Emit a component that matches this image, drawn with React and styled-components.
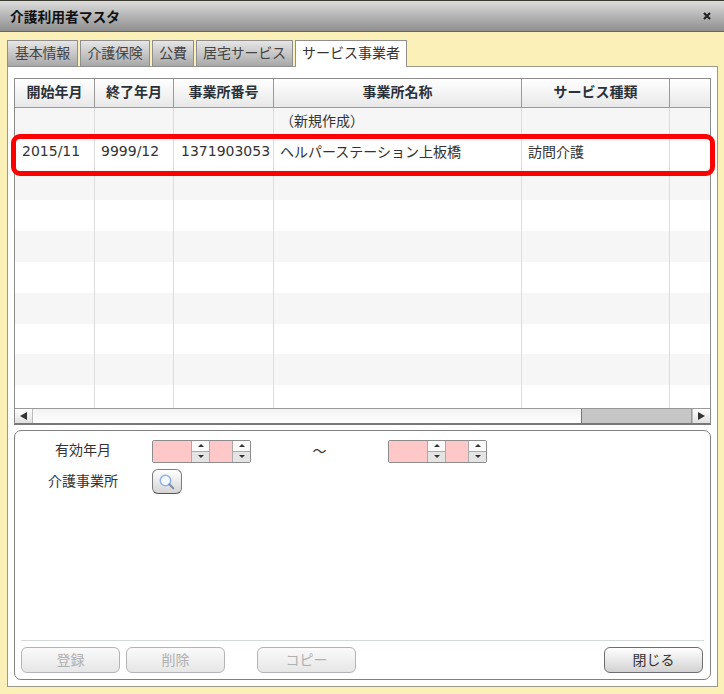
import React from 'react';
import styled, { createGlobalStyle } from 'styled-components';

const GlobalStyle = createGlobalStyle`
  html, body { margin: 0; padding: 0; background: #faf0b8; }
  body { font-family: "DejaVu Sans", "Noto Sans CJK JP", sans-serif; font-size: 14px; color: #222; }
`;

const Win = styled.div`
  width: 724px;
  height: 694px;
  box-sizing: border-box;
  display: flex;
  flex-direction: column;
  background: #faf0b8;
  border-top: 1px solid #3a3a30;
  overflow: hidden;
`;

const TitleBar = styled.div`
  height: 30px;
  flex: none;
  display: flex;
  align-items: center;
  justify-content: space-between;
  padding: 0 12px 0 10px;
  background: linear-gradient(#dcdcdc, #8e8e8e);
  border-bottom: 1px solid #666;
  font-weight: 700;
  font-size: 13.75px;
  color: #111;
`;

const Body = styled.div`
  flex: 1;
  display: flex;
  flex-direction: column;
  padding: 8px 6px 7px 7px;
  min-height: 0;
`;

const Tabs = styled.div`
  display: flex;
  gap: 2px;
  height: 26px;
  flex: none;
  position: relative;
  z-index: 1;
`;

const Tab = styled.div`
  box-sizing: border-box;
  width: ${p => p.$w}px;
  height: 27px;
  display: flex;
  align-items: center;
  justify-content: center;
  padding-bottom: 4px;
  border: 1px solid #8f8f8f;
  border-bottom: ${p => (p.$active ? 'none' : '1px solid #8f8f8f')};
  background: ${p => (p.$active ? '#fff' : 'linear-gradient(#e6e6e6, #a8a8a8)')};
  color: ${p => (p.$active ? '#333' : '#444')};
  font-size: 14px;
  letter-spacing: ${p => (p.$active ? '0' : '-0.2px')};
`;

const Panel = styled.div`
  flex: 1;
  box-sizing: border-box;
  display: flex;
  flex-direction: column;
  background: #fff;
  border: 1px solid #9a9a8a;
  padding: 11px 6px 6px 6px;
  min-height: 0;
`;

const GridBox = styled.div`
  position: relative;
  flex: none;
  height: 347px;
  box-sizing: border-box;
  display: flex;
  flex-direction: column;
  border: 1px solid #8c8c8c;
  border-bottom: 2px solid #777;
`;

const HeaderRow = styled.div`
  display: grid;
  grid-template-columns: 80px 79px 100px 248px 148px 1fr;
  height: 29px;
  box-sizing: border-box;
  flex: none;
  background: linear-gradient(#ffffff, #e8e8e8);
  border-bottom: 1px solid #9a9a9a;
`;

const HeadCell = styled.div`
  display: flex;
  align-items: center;
  justify-content: center;
  padding-bottom: 4px;
  border-right: 1px solid #999;
  font-weight: 700;
  font-size: 14px;
  color: #2b3138;
  &:last-child { border-right: none; }
`;

const Rows = styled.div`
  flex: 1;
  overflow: hidden;
  min-height: 0;
`;

const Row = styled.div`
  display: grid;
  grid-template-columns: 80px 79px 100px 248px 148px 1fr;
  height: 30.8px;
  background: ${p => (p.$odd ? '#f6f6f6' : '#fff')};
`;

const Cell = styled.div`
  display: flex;
  align-items: center;
  padding: 0 0 6px 6px;
  border-right: 1px solid #dcdcdc;
  white-space: nowrap;
  overflow: hidden;
  color: #333;
  &:first-child, &:nth-child(3) { padding-left: 7px; }
  &:last-child { border-right: none; }
`;

const Highlight = styled.div`
  position: absolute;
  left: -4px;
  right: -5px;
  top: 55px;
  height: 42px;
  box-sizing: border-box;
  border: 5px solid #f00;
  border-radius: 9px;
  pointer-events: none;
`;

const ScrollBar = styled.div`
  height: 15px;
  box-sizing: border-box;
  flex: none;
  display: flex;
  align-items: stretch;
  background: linear-gradient(#f2f2f2, #fff);
  border-top: 1px solid #999;
`;

const ScrollArrow = styled.div`
  width: 17px;
  flex: none;
  display: flex;
  align-items: center;
  justify-content: center;
  background: linear-gradient(#fff, #e0e0e0);
  border: solid #bbb;
  border-width: ${p => (p.$right ? '0 0 0 1px' : '0 1px 0 0')};
  &::before {
    content: "";
    border-style: solid;
    border-width: 4px 0;
    border-color: transparent;
    ${p => (p.$right ? 'border-left: 7px solid #333;' : 'border-right: 7px solid #333;')}
  }
`;

const ScrollTrack = styled.div`
  flex: 1;
  display: flex;
  justify-content: flex-end;
`;

const ScrollThumb = styled.div`
  width: 111px;
  box-sizing: border-box;
  background: #c6c6c6;
  border-left: 1px solid #777;
  border-right: 1px solid #999;
`;

const FormPanel = styled.div`
  flex: 1;
  margin-top: 5px;
  box-sizing: border-box;
  display: flex;
  flex-direction: column;
  border: 1px solid #808080;
  border-radius: 7px;
  padding: 8px 6px 6px 6px;
  min-height: 0;
`;

const FormRow = styled.div`
  display: flex;
  align-items: center;
  height: ${p => p.$h}px;
  margin-bottom: ${p => p.$mb || 0}px;
`;

const FormLabel = styled.div`
  width: 124px;
  margin-right: 7px;
  padding-bottom: 4px;
  text-align: center;
  color: #333;
`;

const SpinGroup = styled.div`
  display: flex;
  height: 23px;
  box-sizing: border-box;
  border: 1px solid #8c8c8c;
  border-radius: 2px;
  overflow: hidden;
`;

const SpinInput = styled.div`
  width: ${p => p.$w}px;
  background: #ffc8c8;
`;

const SpinButtons = styled.div`
  width: 17px;
  display: flex;
  flex-direction: column;
  border-left: 1px solid #aaa;
  border-right: ${p => (p.$last ? 'none' : '1px solid #aaa')};
  box-sizing: content-box;
`;

const SpinBtn = styled.div`
  flex: 1;
  display: flex;
  align-items: center;
  justify-content: center;
  background: ${p => (p.$down ? '#e4e4e4' : '#fafafa')};
  border-top: ${p => (p.$down ? '1px solid #aaa' : 'none')};
  &::before {
    content: "";
    border-left: 3px solid transparent;
    border-right: 3px solid transparent;
    ${p => (p.$down ? 'border-top: 3px solid #333;' : 'border-bottom: 3px solid #333;')}
  }
`;

const Tilde = styled.div`
  width: 137px;
  padding-bottom: 2px;
  text-align: center;
  color: #333;
  font-size: 14px;
`;

const SearchButton = styled.div`
  width: 30px;
  height: 25px;
  box-sizing: border-box;
  display: flex;
  align-items: center;
  justify-content: center;
  border: 1px solid #7c7c7c;
  border-bottom-color: #555;
  border-radius: 6px;
  background: linear-gradient(#fff, #d4d4d4);
`;

const Spacer = styled.div`
  flex: 1;
`;

const Divider = styled.div`
  height: 1px;
  flex: none;
  background: #d5dad8;
`;

const Footer = styled.div`
  display: flex;
  flex: none;
  margin-top: 6px;
`;

const Button = styled.div`
  width: 99px;
  height: 26px;
  box-sizing: border-box;
  display: flex;
  align-items: center;
  justify-content: center;
  padding-bottom: 2px;
  margin-right: ${p => p.$mr || 0}px;
  border: 1px solid ${p => (p.disabled ? '#b4b4b4' : '#6e6e6e')};
  border-radius: 6px;
  background: ${p => (p.disabled ? 'linear-gradient(#fafafa, #e6e6e6)' : 'linear-gradient(#fff, #d2d2d2)')};
  color: ${p => (p.disabled ? '#b0b0b0' : '#333')};
  font-size: 14px;
`;

const tabs = [
  { label: '基本情報', w: 71 },
  { label: '介護保険', w: 70 },
  { label: '公費', w: 42 },
  { label: '居宅サービス', w: 97 },
  { label: 'サービス事業者', w: 112, active: true },
];

const headers = ['開始年月', '終了年月', '事業所番号', '事業所名称', 'サービス種類', ''];

const rows = [
  ['', '', '', '\uFF08新規作成\uFF09', '', ''],
  ['2015/11', '9999/12', '1371903053', 'ヘルパーステーション上板橋', '訪問介護', ''],
  ...Array.from({ length: 8 }, () => ['', '', '', '', '', '']),
];

function Spinner({ last }) {
  return (
    <SpinButtons $last={last}>
      <SpinBtn />
      <SpinBtn $down />
    </SpinButtons>
  );
}

function DateSpin() {
  return (
    <SpinGroup>
      <SpinInput $w={38} />
      <Spinner />
      <SpinInput $w={22} />
      <Spinner last />
    </SpinGroup>
  );
}

export default function App() {
  return (
    <Win>
      <GlobalStyle />
      <TitleBar>
        <span>介護利用者マスタ</span>
        <svg width="10" height="10" viewBox="0 0 10 10">
          <path d="M2 2l6 6M8 2l-6 6" stroke="#222" strokeWidth="2.2" />
        </svg>
      </TitleBar>
      <Body>
        <Tabs>
          {tabs.map(t => (
            <Tab key={t.label} $w={t.w} $active={t.active}>{t.label}</Tab>
          ))}
        </Tabs>
        <Panel>
          <GridBox>
            <HeaderRow>
              {headers.map((h, i) => <HeadCell key={i}>{h}</HeadCell>)}
            </HeaderRow>
            <Rows>
              {rows.map((r, i) => (
                <Row key={i} $odd={i % 2 === 0}>
                  {r.map((c, j) => <Cell key={j}>{c}</Cell>)}
                </Row>
              ))}
            </Rows>
            <ScrollBar>
              <ScrollArrow />
              <ScrollTrack><ScrollThumb /></ScrollTrack>
              <ScrollArrow $right />
            </ScrollBar>
            <Highlight />
          </GridBox>
          <FormPanel>
            <FormRow $h={24} $mb={6}>
              <FormLabel>有効年月</FormLabel>
              <DateSpin />
              <Tilde>〜</Tilde>
              <DateSpin />
            </FormRow>
            <FormRow $h={25}>
              <FormLabel>介護事業所</FormLabel>
              <SearchButton>
                <svg width="18" height="18" viewBox="0 0 18 18" fill="none">
                  <circle cx="7.5" cy="7.5" r="5.2" stroke="#8fb0e8" strokeWidth="1.5" fill="#f4f8ff" />
                  <path d="M11.3 11.3l4 4" stroke="#7f8ea8" strokeWidth="2" strokeLinecap="round" />
                </svg>
              </SearchButton>
            </FormRow>
            <Spacer />
            <Divider />
            <Footer>
              <Button disabled $mr={6}>登録</Button>
              <Button disabled $mr={32}>削除</Button>
              <Button disabled $mr={248}>コピー</Button>
              <Button>閉じる</Button>
            </Footer>
          </FormPanel>
        </Panel>
      </Body>
    </Win>
  );
}
